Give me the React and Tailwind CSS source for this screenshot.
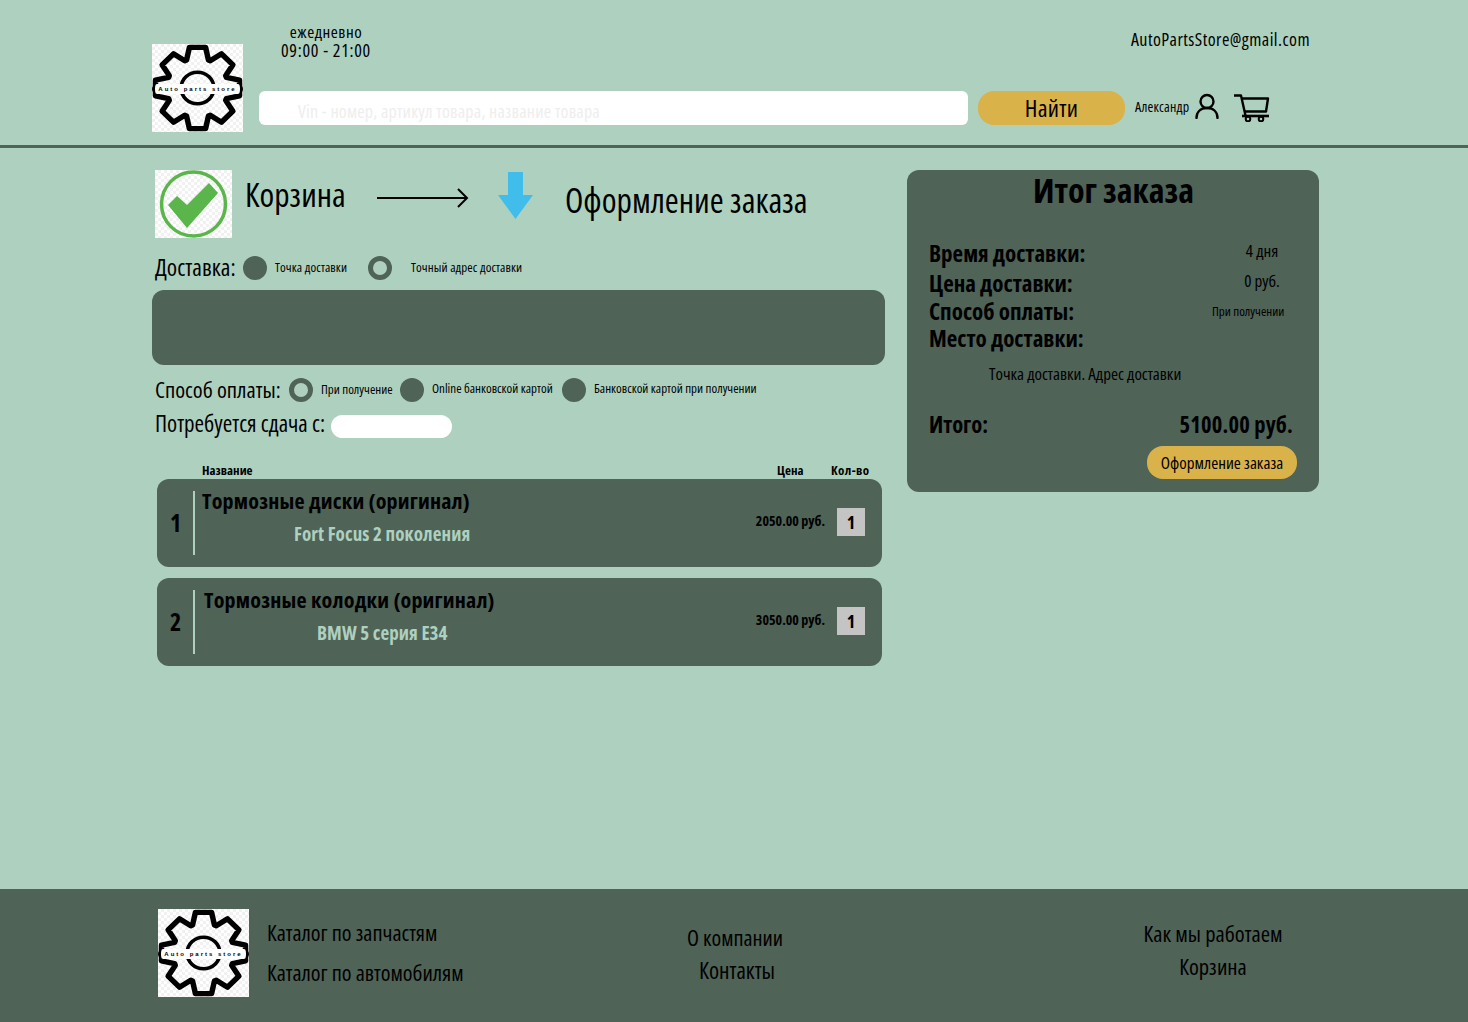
function gearPath() {
  const cx = 50, cy = 50, rOut = 47, rIn = 34
  const pts = []
  for (let i = 0; i < 8; i++) {
    const a = (i * Math.PI) / 4 - Math.PI / 2
    const spread = [[-0.36, rIn], [-0.19, rOut], [0.19, rOut], [0.36, rIn]]
    for (const [da, r] of spread) {
      pts.push(`${(cx + r * Math.cos(a + da)).toFixed(1)} ${(cy + r * Math.sin(a + da)).toFixed(1)}`)
    }
  }
  return 'M' + pts.join('L') + 'Z'
}

function Logo() {
  return (
    <div className="relative h-[88px] w-[91px] shrink-0 bg-[repeating-conic-gradient(#f1f1f1_0_25%,#ffffff_0_50%)] bg-[length:6px_6px]">
      <svg viewBox="0 0 100 100" preserveAspectRatio="none" className="h-full w-full" fill="none" stroke="#000" strokeLinejoin="round">
        <path d={gearPath()} strokeWidth="6" />
        <circle cx="50" cy="50" r="18" strokeWidth="4" />
      </svg>
      <div className="absolute left-0 right-0 top-[40px] flex h-[10px] items-center justify-center whitespace-nowrap rounded-full border-x-[3px] border-black bg-white font-['Liberation_Sans',sans-serif] text-[6px] font-bold tracking-[2px] text-black [font-stretch:100%]">
        Auto parts store
      </div>
    </div>
  )
}

function Dot() {
  return <span className="h-6 w-6 shrink-0 rounded-full bg-[#4f6357]" />
}

function Ring() {
  return <span className="h-6 w-6 shrink-0 rounded-full border-[5px] border-[#4f6357]" />
}

function OrderRow({ n, title, sub, price, titleX, subX }) {
  return (
    <div className="mb-[11.5px] ml-[5px] flex h-[87.5px] w-[725px] items-center rounded-xl bg-[#4f6357] pr-[17px]">
      <div className="w-[36px] pl-[13px] text-[24px] font-bold leading-none text-black">{n}</div>
      <div className="h-[64px] w-[2px] bg-[#aed0bf]" />
      <div className={`flex-1 pb-[12px] ${titleX}`}>
        <div className="text-[22px] font-bold leading-[28px] tracking-[0.2px] text-black">{title}</div>
        <div className={`mt-[6px] text-[19px] font-bold leading-[28px] tracking-[0.1px] text-[#aed0bf] ${subX}`}>{sub}</div>
      </div>
      <div className="mb-1 mr-3 text-[14px] font-bold text-black">{price}</div>
      <div className="-mt-[1px] flex h-7 w-7 items-center justify-center bg-[#c4c4c4] text-[18px] font-bold text-black">1</div>
    </div>
  )
}

function SumRow({ label, value, small, h }) {
  return (
    <div className={`flex items-center ${h}`}>
      <div className="w-[283px] shrink-0 text-[23px] font-bold text-black">{label}</div>
      <div className={`w-[100px] shrink-0 text-center text-black ${small ? 'pr-[30px] text-[13px]' : 'pb-[5px] text-[17px]'}`}>{value}</div>
    </div>
  )
}

export default function App() {
  return (
    <div className="flex h-[1022px] flex-col whitespace-nowrap bg-[#aed0bf] font-['Open_Sans',sans-serif] text-black [font-stretch:75%]">
      {/* шапка */}
      <header className="h-[148px] shrink-0 border-b-[3px] border-[#4f6357] pl-[152px] pr-[158px]">
        <div className="flex h-full">
          <div className="mt-[44px]"><Logo /></div>
          <div className="ml-4 flex-1">
            <div className="flex h-[91px] items-start justify-between">
              <div className="ml-[21px] mt-[23px] w-[92px] text-center">
                <div className="text-[17px] leading-[18px] tracking-[0.5px]">ежедневно</div>
                <div className="text-[18px] leading-[18px] tracking-[0.7px]">09:00 - 21:00</div>
              </div>
              <div className="mt-[29px] text-[18px] leading-5 tracking-[0.45px]">AutoPartsStore@gmail.com</div>
            </div>
            <div className="flex h-[34px] items-center">
              <div className="flex h-full w-[709px] items-center rounded-md bg-white pl-[39px] pt-[6px] text-[18px] tracking-[0.2px] text-[#eeeeee]">
                Vin - номер, артикул товара, название товара
              </div>
              <button className="ml-[10px] h-full w-[147px] rounded-2xl bg-[#d9b24a] text-[24px] font-medium leading-none tracking-[0.3px] text-black">Найти</button>
              <span className="ml-[10px] w-[60px] pb-[3px] text-[14px] tracking-[0.2px]">Александр</span>
              <svg viewBox="0 0 24 26" className="mb-[4px] h-[26px] w-6" fill="none" stroke="#000" strokeWidth="2.4" strokeLinecap="round">
                <circle cx="12" cy="8.5" r="6.5" />
                <path d="M1.5 25c0-6 4-10 10.500-10S22.500 19 22.500 25" />
              </svg>
              <svg viewBox="0 0 36 28" className="ml-[15px] mb-[1px] h-7 w-9" fill="none" stroke="#000" strokeWidth="2.400" strokeLinejoin="round">
                <path d="M0 1.500h7l4.500 20" />
                <path d="M7.500 4.500H34l-2 13H10.500" />
                <path d="M8 22h27" strokeWidth="2.600" />
                <circle cx="14" cy="25" r="2.300" strokeWidth="2" />
                <circle cx="27" cy="25" r="2.300" strokeWidth="2" />
              </svg>
            </div>
          </div>
        </div>
      </header>

      {/* контент */}
      <main className="flex flex-1 pl-[152px] pt-[22px]">
        <div className="w-[733px]">
          <div className="flex h-[68px] items-start pl-[3px]">
            <div className="h-[68px] w-[77px] shrink-0 bg-[repeating-conic-gradient(#f1f1f1_0_25%,#ffffff_0_50%)] bg-[length:6px_6px]">
              <svg viewBox="0 0 77 68" className="h-full w-full">
                <circle cx="38.500" cy="34" r="32" fill="none" stroke="#5ab54b" strokeWidth="3.500" />
                <path d="M13 35 L22 26 L32 35 L54 13 L63 23 L32 58 Z" fill="#5ab54b" />
              </svg>
            </div>
            <div className="ml-[13px] w-[132px] text-[33.500px] leading-[48px]">Корзина</div>
            <svg viewBox="0 0 92 20" className="mt-[18px] h-5 w-[92px]" fill="none" stroke="#000" strokeWidth="2">
              <path d="M0 10h90" /><path d="M81 1l9 9-9 9" />
            </svg>
            <svg viewBox="0 0 35 47" className="ml-[29px] mt-[2px] h-[47px] w-[35px]" fill="#41bdec">
              <path d="M10 0h15v23h10L17.500 47 0 23h10Z" />
            </svg>
            <div className="ml-8 text-[33.700px] leading-[60px]">Оформление заказа</div>
          </div>

          <div className="mt-[18px] flex h-[24px] items-center pl-[3px]">
            <span className="w-[88px] text-[23.5px]">Доставка:</span>
            <Dot />
            <span className="ml-2 w-[93px] text-[13px] tracking-[0.1px]">Точка доставки</span>
            <Ring />
            <span className="ml-[19px] text-[13px] tracking-[0.1px]">Точный адрес доставки</span>
          </div>

          <div className="mt-[10px] h-[75px] rounded-xl bg-[#4f6357]" />

          <div className="mt-[13px] flex h-6 items-center pl-[3px]">
            <span className="w-[134px] text-[22.5px]">Способ оплаты:</span>
            <Ring />
            <span className="ml-2 w-[79px] text-[13px]">При получение</span>
            <Dot />
            <span className="ml-2 w-[130px] pb-[3px] text-[13px]">Online банковской картой</span>
            <Dot />
            <span className="ml-2 pb-[3px] text-[13px]">Банковской картой при получении</span>
          </div>

          <div className="mt-[11px] flex h-6 items-start pl-[3px]">
            <span className="-mt-[7px] w-[176px] text-[23px]">Потребуется сдача с:</span>
            <div className="mt-[2px] h-[23px] w-[121px] rounded-full bg-white" />
          </div>

          <div className="mt-[25px] flex h-[17px] items-center text-[13px] font-bold">
            <span className="ml-[50px] w-[575px]">Название</span>
            <span className="w-[54px]">Цена</span>
            <span className="tracking-[0.4px]">Кол-во</span>
          </div>

          <OrderRow n="1" title="Тормозные диски (оригинал)" sub="Fort Focus 2 поколения" price="2050.00 руб." titleX="pl-[7px]" subX="pl-[92px]" />
          <OrderRow n="2" title="Тормозные колодки (оригинал)" sub="BMW 5 серия E34" price="3050.00 руб." titleX="pl-[9px]" subX="pl-[113px]" />
        </div>

        {/* итог */}
        <aside className="ml-[22px] h-[322px] w-[412px] rounded-xl bg-[#4f6357] pl-[22px] pr-[26px]">
          <div className="pl-[5px] text-center text-[34px] font-bold leading-10">Итог заказа</div>
          <div className="mt-[28px]">
            <SumRow label="Время доставки:" value="4 дня" h="h-[30px]" />
            <SumRow label="Цена доставки:" value="0 руб." h="h-[30px]" />
            <SumRow label="Способ оплаты:" value="При получении" small h="h-[27px]" />
            <SumRow label="Место доставки:" value="" h="h-[27px]" />
          </div>
          <div className="ml-[60px] mt-[12px] text-[17px] leading-5">Точка доставки. Адрес доставки</div>
          <div className="mt-[27px] flex h-7 items-center justify-between text-[22.5px] font-bold">
            <span>Итого:</span>
            <span className="tracking-[0.2px]">5100.00 руб.</span>
          </div>
          <div className="mt-[7px] flex justify-end">
            <button className="-mr-1 h-[33px] w-[150px] rounded-2xl bg-[#d9b24a] text-[17px] font-medium text-black">Оформление заказа</button>
          </div>
        </aside>
      </main>

      {/* подвал */}
      <footer className="flex h-[133px] shrink-0 bg-[#4f6357] pl-[158px] pt-5">
        <Logo />
        <div className="ml-[18px] mt-1 w-[373px] text-[22.200px] leading-[40px]">
          <div>Каталог по запчастям</div>
          <div>Каталог по автомобилям</div>
        </div>
        <div className="mt-[12px] w-[190px] text-center text-[22px] leading-[33px]">
          <div>О компании</div>
          <div className="pl-[4px] text-[23px]">Контакты</div>
        </div>
        <div className="ml-[288px] mt-2 w-[190px] text-center text-[22.500px] leading-[33px]">
          <div>Как мы работаем</div>
          <div>Корзина</div>
        </div>
      </footer>
    </div>
  )
}
